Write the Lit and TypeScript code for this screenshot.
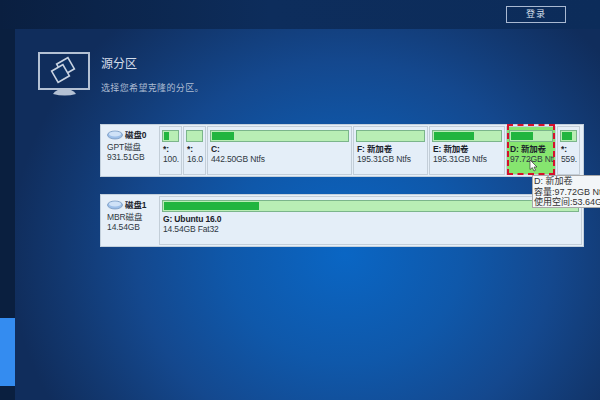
import { LitElement, html, css } from "lit";
import { customElement } from "lit/decorators.js";

interface Part { l1: string; l2: string; w: number; used: number; sel?: boolean; }

const row0: Part[] = [
  { l1: "*:", l2: "100.", w: 23, used: 35 },
  { l1: "*:", l2: "16.0", w: 23, used: 0 },
  { l1: "C:", l2: "442.50GB Ntfs", w: 145, used: 16 },
  { l1: "F: 新加卷", l2: "195.31GB Ntfs", w: 75, used: 0 },
  { l1: "E: 新加卷", l2: "195.31GB Ntfs", w: 76, used: 60 },
  { l1: "D: 新加卷", l2: "97.72GB Ntfs", w: 50, used: 55, sel: true },
  { l1: "*:", l2: "559.", w: 23, used: 75 },
];

@customElement("app-root")
export class AppRoot extends LitElement {
  static styles = css`
    :host { display: block; width: 600px; height: 400px; overflow: hidden; font-family: "Liberation Sans", "Noto Sans CJK SC", sans-serif; }
    .page { position: relative; width: 600px; height: 400px; display: flex; flex-direction: column; background: #0b2a58; overflow: hidden; }
    .top { height: 29px; flex: none; display: flex; justify-content: flex-end; align-items: flex-start; padding: 6px 34px 0 0; box-sizing: border-box;
      background: linear-gradient(90deg, #0a1f40 0%, #0d2d5c 45%, #0c2c5a 100%); }
    .login { width: 60px; height: 17px; box-sizing: border-box; border: 1px solid #a9b9d2; color: #d8e0ec; font-size: 9px; line-height: 15px; text-align: center; letter-spacing: 1px; }
    .body { flex: 1; display: flex; min-height: 0; }
    .side { width: 15px; flex: none; background: #0a1f3f; display: flex; flex-direction: column; justify-content: flex-end; padding-bottom: 14px; }
    .side i { display: block; height: 68px; background: #348cf0; }
    .main { flex: 1; padding: 19px 16px 0 23px; min-width: 0;
      background: radial-gradient(ellipse 335px 310px at 330px 225px, #0a66c4 0%, #0f58aa 35%, #14488e 62%, #123870 84%, #102d5c 100%); }
    .head { display: flex; gap: 9px; padding-top: 3px; height: 76px; box-sizing: border-box; }
    .head svg { display: block; flex: none; width: 54px; height: 44px; margin-top: 1px; }
    .ttl { color: #d5dde9; font-size: 12px; line-height: 16px; margin-top: 5px; }
    .sub { color: #aebdd3; font-size: 9px; line-height: 12px; margin-top: 10px; letter-spacing: .35px; }
    .disks { display: flex; flex-direction: column; gap: 17px; margin-left: 62px; }
    .disk { display: flex; height: 53px; background: #e6eff8; border: 1px solid #c3d0dc; box-sizing: border-box; padding: 1px 1px 1px 0; }
    .info { width: 58px; flex: none; color: #2f3842; font-size: 8.5px; letter-spacing: -.1px; line-height: 10px; padding: 4px 0 0 6px; box-sizing: border-box; }
    .name { display: flex; align-items: center; gap: 2px; font-weight: 700; color: #1a222a; height: 10px; margin-bottom: 2px; }
    .name svg { display: block; width: 16px; height: 10px; }
    .parts { display: flex; gap: 1px; flex: 1; min-width: 0; }
    .p { box-sizing: border-box; height: 49px; border: 1px solid #c3ced8; background: #e4eef8; padding: 3px 2px 0; font-size: 8.5px; letter-spacing: -.15px; line-height: 10px; color: #2f3842; overflow: hidden; white-space: nowrap; }
    .p b { display: block; color: #1a222a; margin-top: 2px; }
    .p b, .p span { padding-left: 1px; }
    .bar { height: 12px; box-sizing: border-box; border: 1px solid #7bb58b; background: #b9eeb5; padding: 1px; }
    .bar i { display: block; height: 100%; background: #21b53f; }
    .p.sel { position: relative; background: #86e56f; overflow: visible; }
    .p.sel span { display: block; width: 44px; overflow: hidden; }
    .p.sel::after { content: ""; position: absolute; inset: -3px 0 -1px 0; border: 2px dashed #d5112a; pointer-events: none; }
    .grow { flex: 1; }
    .tip { position: absolute; left: 532px; top: 175px; width: 80px; height: 33px; background: #f3f6f8; border: 1px solid #a8a8a8; box-sizing: border-box; font-size: 9px; line-height: 10.5px; padding: 0 1px; color: #333; white-space: nowrap; overflow: hidden; }
    .cur { position: absolute; left: 529px; top: 159px; width: 10px; height: 13px; }
  `;

  bar(p: Part) {
    return html`<div class="bar"><i style="width:${p.used}%"></i></div>`;
  }

  disk(name: string, l1: string, l2: string) {
    return html`<div class="info">
      <div class="name"><svg viewBox="0 0 16 10"><ellipse cx="8" cy="5" rx="7.5" ry="4" fill="#9dbfe8" stroke="#6d8fb8" stroke-width=".7"/><ellipse cx="8" cy="4" rx="6" ry="2.6" fill="#cfe2f7"/></svg><span>${name}</span></div>
      <div>${l1}</div><div>${l2}</div></div>`;
  }

  render() {
    return html`<div class="page">
      <div class="top"><div class="login">登录</div></div>
      <div class="body">
        <div class="side"><i></i></div>
        <div class="main">
          <div class="head">
            <svg viewBox="0 0 54 44" fill="none">
              <rect x="1" y="1" width="50" height="36" stroke="#b4c1d4" stroke-width="2"/>
              <path d="M15 42 q3 -5 11 -5 q9 0 12 5 q-11 3 -23 0Z" fill="#b4c1d4"/>
              <g stroke="#c7d2e1" stroke-width="1.6" fill="#0e3264">
                <rect x="21" y="8" width="13" height="13" transform="rotate(-30 27.5 14.5)"/>
                <rect x="16" y="15" width="13" height="13" transform="rotate(-30 22.5 21.5)"/>
              </g>
            </svg>
            <div>
              <div class="ttl">源分区</div>
              <div class="sub">选择您希望克隆的分区。</div>
            </div>
          </div>
          <div class="disks">
            <div class="disk">
              ${this.disk("磁盘0", "GPT磁盘", "931.51GB")}
              <div class="parts">
                ${row0.map((p) => html`<div class="p ${p.sel ? "sel" : ""}" style="width:${p.w}px">${this.bar(p)}<b>${p.l1}</b><span>${p.l2}</span></div>`)}
              </div>
            </div>
            <div class="disk">
              ${this.disk("磁盘1", "MBR磁盘", "14.54GB")}
              <div class="p grow"><div class="bar"><i style="width:23%"></i></div><b>G: Ubuntu 16.0</b><span>14.54GB Fat32</span></div>
            </div>
          </div>
        </div>
      </div>
      <svg class="cur" viewBox="0 0 10 13"><path d="M1 1 L1 10.5 L3.3 8.6 L5 12 L6.6 11.2 L5 8 L8 8 Z" fill="#fff" stroke="#333" stroke-width=".7"/></svg>
      <div class="tip">D: 新加卷<br/>容量:97.72GB Ntfs<br/>使用空间:53.64GB</div>
    </div>`;
  }
}
